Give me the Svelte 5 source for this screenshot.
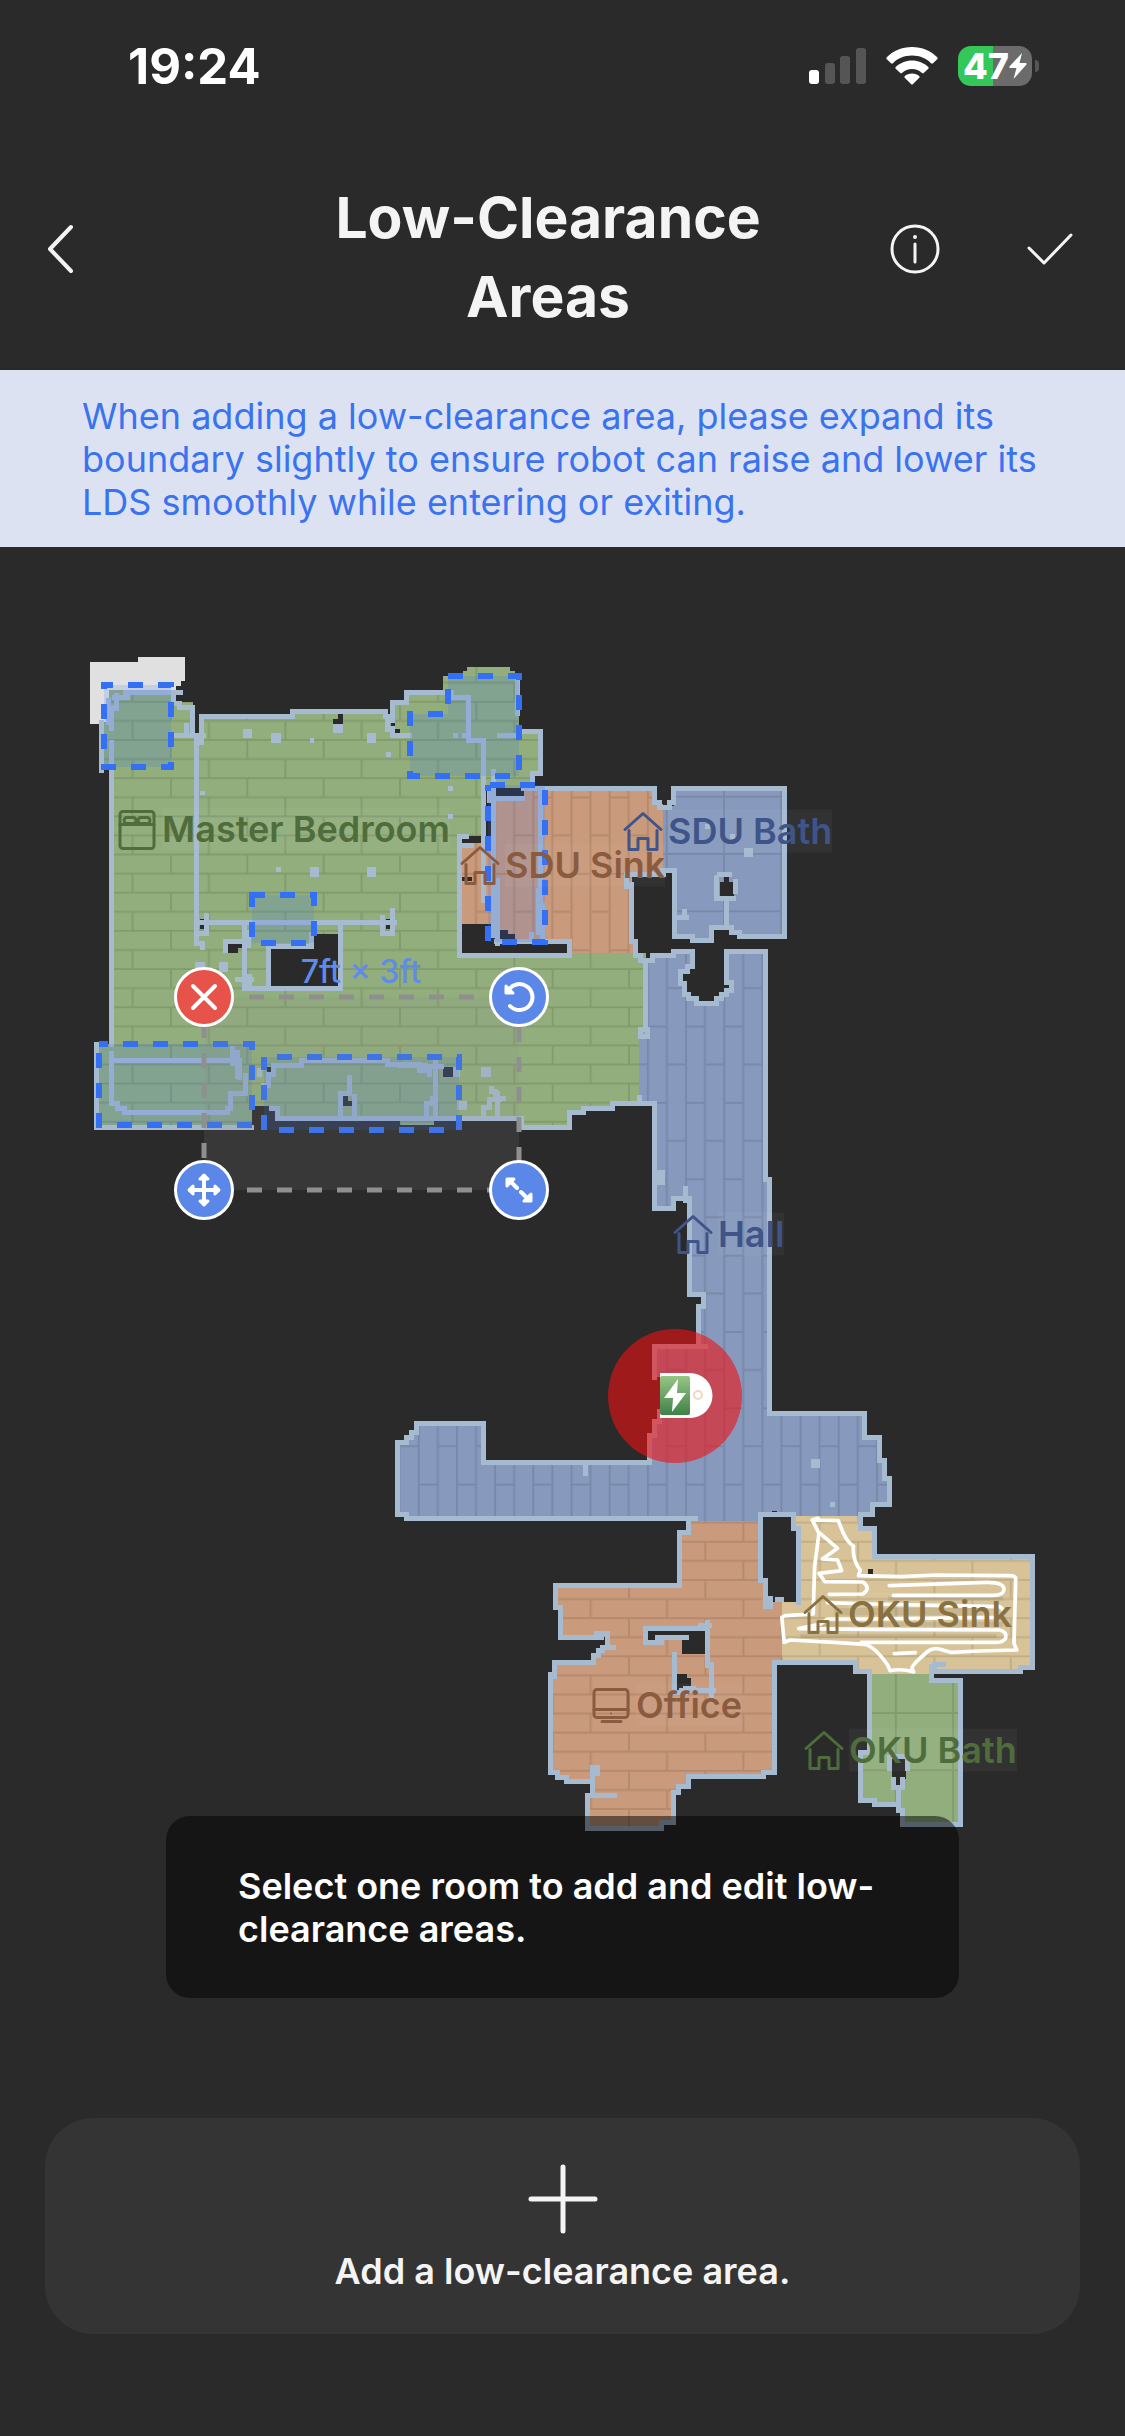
<script lang="ts">
	type IconName = 'bed' | 'house' | 'desk';

	interface RoomLabel {
		name: string;
		icon: IconName;
		x: number;
		y: number;
		tone: string;
	}

	interface Handle {
		id: 'delete' | 'rotate' | 'move' | 'resize';
		label: string;
		x: number;
		y: number;
	}

	const MAP_W = 1125;
	const MAP_TOP = 547;
	const MAP_H = 1571;

	const labels: RoomLabel[] = [
		{ name: 'Master Bedroom', icon: 'bed', x: 118, y: 829, tone: 'green' },
		{ name: 'SDU Sink', icon: 'house', x: 461, y: 865, tone: 'orange' },
		{ name: 'SDU Bath', icon: 'house', x: 624, y: 831, tone: 'blue' },
		{ name: 'Hall', icon: 'house', x: 674, y: 1234, tone: 'blue' },
		{ name: 'OKU Sink', icon: 'house', x: 804, y: 1614, tone: 'yellow' },
		{ name: 'Office', icon: 'desk', x: 592, y: 1705, tone: 'orange' },
		{ name: 'OKU Bath', icon: 'house', x: 805, y: 1750, tone: 'green' }
	];

	const handles: Handle[] = [
		{ id: 'delete', label: 'Delete area', x: 204, y: 997 },
		{ id: 'rotate', label: 'Rotate area', x: 519, y: 997 },
		{ id: 'move', label: 'Move area', x: 204, y: 1190 },
		{ id: 'resize', label: 'Resize area', x: 519, y: 1190 }
	];

	const rooms = [
		{
			color: '#92ae7c',
			pattern: 'brick',
			d: 'M109 690H176V702H193V732H202V716H293V711H386V716H393V702H407V692H443V676H463V671H467V667H510V671H515V676H519V731H541V773H532V788H484V836H460V953H646V1038H640V1103H613V1108H584V1112H570V1127H522V1118H434V1125H400V1118H278V1106H252V1128H95V1044H112V770H102V722H109Z'
		},
		{
			color: '#c99a7b',
			pattern: 'plank',
			d: 'M462 843H496V798H524V788H655V804H663V874H632V940H636V953H572V941H515V934H508V930H500V924H462Z'
		},
		{
			color: '#8799bd',
			pattern: 'tile',
			d: 'M663 806H674V788H785V936H737V932H732V927H712V940H692V936H675V870H663Z'
		},
		{
			color: '#8799bd',
			pattern: 'plank',
			d: 'M646 960H651V955H674V951H693V967H688V971H680V983H685V994H689V998H697V1003H717V998H722V994H727V990H732V982H727V951H766V1179H770V1413H865V1437H880V1460H885V1478H890V1504H874V1514H861V1516H777V1514H763V1521H689V1518H407V1514H398V1442H407V1437H412V1433H417V1423H484V1462H650V1435H655V1421H660V1377H655V1346H699V1306H704V1294H690V1198H674V1208H655V1103H639V1038H646Z'
		},
		{
			color: '#c99a7b',
			pattern: 'brick',
			d: 'M689 1521H761V1580H766V1602H782V1662H775V1772H764V1776H689V1786H679V1792H674V1822H662V1828H588V1795H593V1781H567V1777H558V1772H551V1674H555V1662H594V1655H599V1650H608V1637H561V1607H556V1585H680V1532H689Z'
		},
		{
			color: '#d7c397',
			pattern: 'brick',
			d: 'M796 1516H861V1528H875V1556H1033V1667H1021V1672H935V1674H872V1671H856V1662H782V1602H799V1530H796Z'
		},
		{
			color: '#92ae7c',
			pattern: 'tile',
			d: 'M872 1674H932V1680H961V1824H903V1810H899V1804H875V1800H861V1752H870Z'
		}
	];

	// outer outlines first, then the walls inside each room
	const walls = [
		'M109 722V700M102 722V770M112 742V1044M112 707V728M126 692H181M174 692V703H180V707H193V735H177M197 735H190M187 725V735M193 735H204M202 742V716H293V711H386V716H388V729M393 720V702H407V692H452M393 728V735H410',
		'M518 678V713M522 731H541V773H533V788M524 788H655V802H660V807H670V802H674V788H785V936H740V932H732V927H712V940H693V936H675V870H663M664 874H627V886M632 884V941H636V955H641V960H646V1029M641 1029H648V1036H641ZM646 960H653V955H674V951H693V966M688 966V971H681V983H685V994H689V998H697V1003H717V998H722V994H727V990H732V982H727V951H766V1179H770V1413H865V1437H880V1460H885V1478H890V1504H873V1514H861V1528H875V1556H1033V1667H1021V1671H935V1664H944',
		'M932 1666V1680H961V1824H903V1810H899V1804H875V1800H861V1752H868M870 1752V1671H856V1662H775V1772H764M764 1776H689V1786H679V1792H674V1822H662V1828H588V1795H615M593 1795V1767H598V1773H593M593 1781H567V1777H558V1772H551V1674M555 1676V1662H594V1655H599V1650H603V1647H614M608 1647V1633H597M602 1637H561V1607H556V1585H680V1532H689V1518H407V1514H398V1442H407V1437H412V1432H417V1423H484V1462H650V1435H655V1421H660V1411M655 1377V1346H706M699 1346V1306H704V1294H690V1198H674V1208H655V1103H613V1108H584V1112H570V1127H522V1118H278V1108H272M640 1103V1097M252 1127H97V1044',
		'M689 1518H696M686 1188V1200M660 1172V1182M663 1172V1182',
		'M761 1580V1514H772M766 1580V1606H771V1598M777 1514H794V1528H799V1602M778 1599H782',
		'M453 697H469V740H484V900M494 771V935M498 930V943M490 790V800M496 798H523M541 788V915M543 905V941M497 941H570V955H460V836H467M462 845H472M498 880V940M539 890V932M497 941H532M532 934V941M500 735H517',
		'M117 695V708M115 697H128M197 735V943H203V947M200 922H395M207 915V933H201M393 910V933H383V917M245 922V988H341V922M269 986V946H312V934M226 950V941H245M238 979H252M250 976V988M249 932V945',
		'M112 1053V1103H118V1108H125V1112H228V1108H231V1093H246V1075M114 1060H235M233 1048V1063M238 1052V1076M240 1060V1077',
		'M264 1097V1085H269V1074H274V1065H302V1060H388V1064H420V1070H430V1074M436 1062V1118M420 1066H442M427 1117V1103H433V1098M350 1077V1093H341V1116M355 1116V1096M492 1088V1091H496V1098H504M498 1093V1117M500 1099H490V1107H484V1117M400 1065H426',
		'M727 898V927M717 877V898H734M720 874H730M736 881V891M676 917H687M685 911V917',
		'M701 1625H710M708 1622V1665M712 1664V1695M646 1628H708M646 1628V1642H662M658 1637H667M672 1637H687M675 1654V1692M682 1690H714M686 1688H694M679 1692H686',
		'M890 1757V1768M908 1757V1768M892 1756H906M894 1779V1787M903 1779V1787M899 1787V1810M586 1462V1473'
	];

	const specks = [
		[243, 729, 9, 9],
		[271, 733, 10, 10],
		[333, 724, 10, 9],
		[367, 733, 9, 10],
		[310, 738, 4, 5],
		[386, 752, 5, 5],
		[448, 786, 5, 5],
		[448, 814, 5, 5],
		[310, 867, 9, 10],
		[367, 867, 9, 10],
		[276, 867, 5, 5],
		[200, 791, 5, 4],
		[453, 733, 5, 5],
		[462, 733, 8, 5],
		[195, 962, 10, 8],
		[219, 962, 9, 10],
		[257, 1068, 5, 9],
		[453, 1067, 7, 10],
		[481, 1067, 10, 10],
		[457, 1101, 10, 9],
		[744, 848, 9, 9],
		[730, 834, 5, 5],
		[705, 824, 5, 5],
		[811, 1459, 9, 9],
		[830, 1502, 5, 5],
		[493, 886, 7, 5]
	];

	// unscanned cells, seen as holes in the floor
	const holes = [
		'M338 714H343V724H333V719H338Z',
		'M391 719H395V728H391ZM395 729H400V733H395ZM190 729H200V733H190Z',
		'M486 786H491V840H486ZM520 791H524V795H520Z',
		'M200 919H205V929H200ZM386 919H391V929H386Z',
		'M314 934H338V986H271V948H314Z',
		'M228 943H243V948H238V953H228Z',
		'M462 924H481V953H462ZM529 943H567V953H529ZM462 877H472V881H462Z',
		'M720 882H724V877H729V882H734V896H720Z',
		'M443 1067H453V1077H443ZM343 1096H348V1101H353V1106H343ZM271 1063H276V1067H271ZM267 1067H271V1072H267Z',
		'M648 1631H706V1654H682V1640H672V1635H658V1640H648Z',
		'M677 1674H687V1678H691V1688H682V1692H677Z',
		'M892 1759H906V1779H901V1787H896V1779H892Z',
		'M763 1516H772V1511H777V1516H792V1530H797V1602H771V1597H768V1578H763Z',
		'M868 1569H873V1577H863V1574H868Z'
	];

	const zones = [
		{ d: 'M104 685H171V767H104Z', offset: 6 },
		{ d: 'M448 676H519V776H410V714H448Z', offset: 0 },
		{ d: 'M488 785H545V942H488Z', offset: 28 },
		{ d: 'M252 895H314V943H252Z', offset: 2 },
		{ d: 'M99 1044H252V1125H99Z', offset: 6 },
		{ d: 'M264 1057H459V1130H264Z', offset: 17 }
	];

	const left = (x: number) => `${(x / MAP_W) * 100}%`;
	const top = (y: number) => `${((y - MAP_TOP) / MAP_H) * 100}%`;
</script>

<div class="screen">
	<div class="status">
		<span class="time">19:24</span>
		<div class="indicators">
			<svg width="57" height="38" viewBox="0 0 57 38" aria-hidden="true">
				<rect x="0" y="23" width="10" height="14" rx="3" fill="#fff" />
				<g fill="#555">
					<rect x="16" y="16" width="10" height="21" rx="3" />
					<rect x="31" y="9" width="10" height="28" rx="3" />
					<rect x="47" y="1" width="10" height="36" rx="3" />
				</g>
			</svg>
			<svg width="52" height="38" viewBox="0 0 52 38" aria-hidden="true">
				<g fill="#fff">
					<path d="M26 0C16 0 7 4 .5 10.500Q0 11.500 .8 12.300L5 16.300Q6 17 7 16.200C12 11.300 18.500 8.600 26 8.600S40 11.300 45 16.200Q46 17 47 16.300L51.200 12.300Q52 11.500 51.500 10.500C45 4 36 0 26 0Z" />
					<path d="M26 13.500C20 13.500 14 16 9.600 20Q9 21 9.700 21.700L14.300 26Q15 26.500 16 26C18.700 23.400 22 22 26 22S33.300 23.400 36 26Q37 26.500 37.700 26L42.300 21.700Q43 21 42.400 20C38 16 32 13.500 26 13.500Z" />
					<path d="M26 26.500C23 26.500 20.500 27.500 18.600 29.200Q18 30 18.700 30.800L25 37Q26 38 27 37L33.300 30.800Q34 30 33.400 29.200C31.500 27.500 29 26.500 26 26.500Z" />
				</g>
			</svg>
			<div class="battery">
				<span class="level">47</span>
				<svg width="18" height="26" viewBox="0 0 18 26" aria-hidden="true">
					<path d="M13 0L.5 13.500Q0 15 1.500 15H7.500L4.500 26L17.500 11.500Q18 10 16.500 10H10.500Z" fill="#fff" />
				</svg>
			</div>
		</div>
	</div>

	<header>
		<button type="button" class="icon-btn back" aria-label="Back">
			<svg width="30" height="50" viewBox="0 0 30 50">
				<path d="M26 3L5 25L26 47" />
			</svg>
		</button>
		<h1>Low-Clearance Areas</h1>
		<div class="actions">
			<button type="button" class="icon-btn" aria-label="Info">
				<svg width="50" height="50" viewBox="0 0 50 50">
					<circle cx="25" cy="25" r="23" />
					<path d="M25 20V38" />
					<circle cx="25" cy="13" r="1" fill="#f4f4f4" stroke-width="2" />
				</svg>
			</button>
			<button type="button" class="icon-btn" aria-label="Save">
				<svg width="52" height="50" viewBox="0 0 52 50">
					<path d="M5 24L20 39L47 11" />
				</svg>
			</button>
		</div>
	</header>

	<p class="notice">
		When adding a low-clearance area, please expand its boundary slightly to ensure robot can raise
		and lower its LDS smoothly while entering or exiting.
	</p>

	<main class="map">
		<svg class="plan" viewBox="0 {MAP_TOP} {MAP_W} {MAP_H}" role="img" aria-label="Floor plan">
			<defs>
				<pattern id="brick" patternUnits="userSpaceOnUse" x="246.300" y="739" width="76.350" height="38.180">
					<path d="M0 1H76.350M0 20H76.350M1 0V19M39 19V38.180" />
				</pattern>
				<pattern id="plank" patternUnits="userSpaceOnUse" x="570.500" y="796.500" width="38.180" height="76.350">
					<path d="M1 0V76.350M20 0V76.350M0 1H19M19 39H38.180" />
				</pattern>
				<pattern id="tile" patternUnits="userSpaceOnUse" x="723" y="853" width="57.270" height="57.270">
					<path d="M0 1H57.270M1 0V57.270" />
				</pattern>
				<linearGradient id="dock" x1="0" y1="0" x2="0" y2="1">
					<stop offset="0" stop-color="#97c585" />
					<stop offset="1" stop-color="#3f8148" />
				</linearGradient>
			</defs>

			<g shape-rendering="crispEdges">
				<path
					fill="#e0e0e0"
					d="M90 662H138V657H185V681H181V686H176V692H109V724H90Z"
				/>
				{#each rooms as room}
					<path d={room.d} fill={room.color} />
					<path d={room.d} fill="url(#{room.pattern})" />
				{/each}
				{#each holes as d}
					<path {d} fill="#2a2a2a" />
				{/each}
				<g transform="translate(-1 0)">
					{#each walls as d}
						<path {d} class="wall" />
					{/each}
				</g>
				{#each specks as [x, y, width, height]}
					<rect {x} {y} {width} {height} fill="#a6bad0" />
				{/each}
			</g>

			<!-- cleaning route -->
			<g transform="translate(530 1500) scale(.338 .3333)">
				<g fill="#000" opacity=".08">
					<rect x="1060" y="290" width="340" height="12" />
					<rect x="900" y="324" width="440" height="22" />
					<rect x="850" y="366" width="550" height="14" />
					<rect x="800" y="402" width="580" height="12" />
				</g>
				<g class="route">
					<path d="M835 60L912 62L925 95Q940 128 957 138Q953 180 977 210L972 227L1100 230L1200 225L1420 227Q1438 228 1437 237L1432 430L1440 450L1330 453L1245 457L1210 447Q1185 442 1165 465Q1130 495 1130 505L1135 516Q1100 505 1065 512L1058 495Q1020 440 990 433L900 427L770 420L752 427L745 352L755 347L838 342L842 200L855 100L835 60L852 55" />
					<path d="M855 97L910 145L865 177L910 180L922 212L855 220L872 245L985 246Q1010 265 985 282L885 283" />
					<path d="M1063 257L1350 247Q1405 246 1402 270Q1400 286 1370 286L1075 286" />
					<path d="M880 308L1000 312L1390 320Q1412 335 1390 352L1000 357H880L860 372L795 386L1000 388L1390 390Q1412 395 1407 415Q1400 427 1380 427H980" />
					<path d="M1078 461L1140 458" />
				</g>
			</g>

			{#each zones as zone}
				<path d={zone.d} class="zone" stroke-dashoffset={zone.offset} />
			{/each}

			<rect class="selection" x="204" y="997" width="315" height="193" />

			<!-- charging dock with its no-go circle -->
			<circle cx="675" cy="1396" r="67" fill="rgb(242 15 15 / .59)" />
			<path d="M660 1373H690A22 22 0 0 1 690 1418H660Z" fill="#fff" />
			<rect x="660" y="1376" width="30" height="39" rx="2" fill="url(#dock)" />
			<path d="M678 1379L664 1398H673L672 1412L686 1393H677Z" fill="#fff" />
			<circle cx="698" cy="1395" r="4" fill="none" stroke="#ecd9c0" stroke-width="2" />
		</svg>

		{#each labels as room}
			<div class="label {room.tone}" style:left={left(room.x)} style:top={top(room.y)}>
				<svg width="38" height="42" viewBox="0 0 38 42" aria-hidden="true">
					{#if room.icon === 'bed'}
						<rect x="2" y="3" width="34" height="37" rx="3" />
						<path d="M2 16H36" />
						<rect x="6" y="9" width="12" height="6" rx="3" />
						<rect x="20" y="9" width="12" height="6" rx="3" />
					{:else if room.icon === 'desk'}
						<rect x="2" y="5" width="34" height="28" rx="3" />
						<path d="M2 25H36M10 37H29" />
						<circle cx="19" cy="29" r="1" class="dot" />
					{:else}
						<path d="M1 19L19 3L37 19M5 20V39H14V28H24V39H33V20" />
					{/if}
				</svg>
				<span>{room.name}</span>
			</div>
		{/each}

		<span class="size" style:left={left(361)} style:top={top(971)}>7ft × 3ft</span>

		{#each handles as handle}
			<button
				type="button"
				class="handle {handle.id}"
				aria-label={handle.label}
				style:left={left(handle.x)}
				style:top={top(handle.y)}
			>
				<svg width="40" height="40" viewBox="0 0 40 40">
					{#if handle.id === 'delete'}
						<path d="M9 9L31 31M31 9L9 31" />
					{:else if handle.id === 'rotate'}
						<path d="M9 14A13 13 0 1 1 11 29" />
						<path d="M7 9V16H14Z" class="tip" />
					{:else if handle.id === 'move'}
						<path d="M20 6V34M6 20H34" />
						<path d="M20 5L24 9H16ZM20 35L24 31H16ZM5 20L9 16V24ZM35 20L31 16V24Z" class="tip" />
					{:else}
						<path d="M10 10L18 18M22 22L30 30" />
						<path d="M8 9H15L8 16ZM32 31H25L32 24Z" class="tip" />
					{/if}
				</svg>
			</button>
		{/each}

		<div class="toast" role="status">Select one room to add and edit low-clearance areas.</div>
	</main>

	<button type="button" class="add">
		<svg width="72" height="72" viewBox="0 0 72 72" aria-hidden="true">
			<path d="M36 4V68M4 36H68" />
		</svg>
		Add a low-clearance area.
	</button>
</div>

<style>
	:global(body) {
		background: #2a2a2a;
	}
	.screen {
		display: flex;
		flex-direction: column;
		min-height: 100vh;
		background: #2a2a2a;
		color: #f4f4f4;
		font-family: Inter, 'Liberation Sans', sans-serif;
		font-size: 36px;
		line-height: 43px;
	}
	button {
		padding: 0;
		border: 0;
		background: none;
		color: inherit;
		font: inherit;
		cursor: pointer;
	}
	svg {
		display: block;
		flex: none;
		overflow: visible;
	}
	.status {
		display: flex;
		justify-content: space-between;
		align-items: center;
		height: 132px;
		padding: 0 93px 0 128px;
		box-sizing: border-box;
		color: #fff;
	}
	.time {
		font-size: 49px;
		font-weight: 700;
	}
	.indicators {
		display: flex;
		align-items: center;
		gap: 20px;
	}
	.battery {
		position: relative;
		display: flex;
		align-items: center;
		justify-content: center;
		width: 74px;
		height: 40px;
		border-radius: 13px;
		background: linear-gradient(90deg, #34c759 47%, #6b6b6b 47%);
	}
	.battery::after {
		content: '';
		position: absolute;
		left: 77px;
		width: 4px;
		height: 12px;
		border-radius: 0 4px 4px 0;
		background: #555;
	}
	.level {
		font-size: 36px;
		font-weight: 800;
	}
	header {
		display: grid;
		grid-template-columns: 221px 1fr 250px;
		align-items: center;
		height: 238px;
		padding: 0 45px 4px;
		box-sizing: border-box;
	}
	h1 {
		margin: 0;
		padding-top: 16px;
		font-size: 57px;
		font-weight: 700;
		line-height: 79px;
		text-align: center;
	}
	.icon-btn svg {
		fill: none;
		stroke: #f4f4f4;
		stroke-width: 3;
		stroke-linecap: round;
		stroke-linejoin: round;
	}
	.back {
		justify-self: start;
	}
	.back svg {
		stroke-width: 4;
	}
	.actions {
		display: flex;
		justify-content: flex-end;
		gap: 84px;
		padding-right: 4px;
	}
	.notice {
		margin: 0;
		padding: 25px 82px 23px;
		background: #dde2f2;
		color: #3a73f0;
	}
	.map {
		position: relative;
	}
	.plan {
		width: 100%;
	}
	.plan pattern path {
		stroke: #000;
		stroke-width: 2;
		opacity: 0.1;
	}
	.wall {
		fill: none;
		stroke: #a6bad0;
		stroke-width: 5;
		stroke-linecap: square;
	}
	.route {
		fill: none;
		stroke: #fff;
		stroke-width: 11;
		stroke-linecap: round;
		stroke-linejoin: round;
	}
	.zone {
		fill: rgb(51 112 246 / 0.17);
		stroke: #3370f6;
		stroke-width: 6;
		stroke-dasharray: 15;
	}
	.selection {
		fill: rgb(144 144 144 / 0.14);
		stroke: #8f8f8f;
		stroke-width: 5;
		stroke-dasharray: 15;
		stroke-dashoffset: 15;
	}
	.label {
		position: absolute;
		display: flex;
		align-items: center;
		gap: 6px;
		transform: translateY(-50%);
		font-weight: 600;
		white-space: nowrap;
	}
	.label span {
		background: rgb(255 255 255 / 0.04);
	}
	.label svg {
		fill: none;
		stroke: currentColor;
		stroke-width: 3;
		stroke-linejoin: round;
		stroke-linecap: round;
	}
	.label .dot {
		fill: currentColor;
		stroke: none;
	}
	.green {
		color: #4f6d3c;
	}
	.orange {
		color: #8b5b40;
	}
	.blue {
		color: #3f5488;
	}
	.yellow {
		color: #8a7142;
	}
	.size {
		position: absolute;
		transform: translate(-50%, -50%);
		color: #5f8ce8;
		font-size: 32px;
		font-weight: 500;
		white-space: nowrap;
	}
	.handle {
		position: absolute;
		display: grid;
		place-items: center;
		width: 60px;
		height: 60px;
		border: 3px solid #fff;
		border-radius: 50%;
		box-sizing: border-box;
		background: #5b87e8;
		transform: translate(-50%, -50%);
	}
	.delete {
		background: #e7534a;
	}
	.handle svg {
		fill: none;
		stroke: #fff;
		stroke-width: 4;
		stroke-linecap: round;
		stroke-linejoin: round;
	}
	.handle .tip {
		fill: #fff;
		stroke-width: 3;
	}
	.toast {
		position: absolute;
		right: 166px;
		bottom: 120px;
		left: 166px;
		padding: 49px 72px 47px;
		border-radius: 24px;
		background: rgb(0 0 0 / 0.5);
		color: #fff;
		font-weight: 600;
	}
	.add {
		display: flex;
		flex-direction: column;
		align-items: center;
		gap: 15px;
		margin: 0 45px 102px;
		padding: 45px 24px 41px;
		border-radius: 48px;
		background: #343434;
		font-weight: 600;
	}
	.add svg {
		stroke: #f4f4f4;
		stroke-width: 5;
		stroke-linecap: round;
	}
</style>
